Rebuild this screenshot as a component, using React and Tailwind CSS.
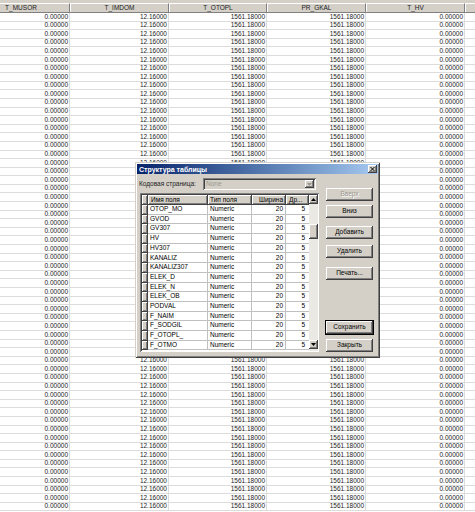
import React from 'react';

const cols = [
  { name: 'T_MUSOR', value: '0.00000', w: 'w-[98px]' },
  { name: 'T_IMDOM', value: '12.16000', w: 'w-[99px]' },
  { name: 'T_OTOPL', value: '1561.18000', w: 'w-[98px]' },
  { name: 'PR_GKAL', value: '1561.18000', w: 'w-[99px]' },
  { name: 'T_HV', value: '0.00000', w: 'w-[99px]' },
  { name: '', value: '', w: 'w-[99px]' },
];

const fields = [
  'OTOP_MO', 'GVOD', 'GV307', 'HV', 'HV307', 'KANALIZ', 'KANALIZ307', 'ELEK_D',
  'ELEK_N', 'ELEK_OB', 'PODVAL', 'F_NAIM', 'F_SODGIL', 'F_OTOPL_', 'F_OTMO',
];

const raised =
  'bg-[#d4d0c8] shadow-[inset_-1px_-1px_0_#404040,inset_1px_1px_0_#ffffff,inset_-2px_-2px_0_#808080]';

const Btn = ({ children, disabled, isDefault, className = '' }) => (
  <div
    className={`h-[13px] w-[47px] flex items-center justify-center text-[6.5px] leading-none ${raised} ${
      isDefault ? 'outline outline-1 outline-black' : ''
    } ${disabled ? 'text-[#9a978f] [text-shadow:1px_1px_0_#ffffff]' : 'text-black'} ${className}`}
  >
    {children}
  </div>
);

const Arrow = ({ up }) => (
  <div className={`w-[9px] h-[9px] flex items-center justify-center ${raised}`}>
    <svg width="5" height="3" viewBox="0 0 5 3">
      <path d={up ? 'M0 3 L2.5 0 L5 3 Z' : 'M0 0 L2.5 3 L5 0 Z'} fill="#000" />
    </svg>
  </div>
);

const Dialog = () => (
  <div
    className="absolute left-[135px] top-[162px] w-[245px] h-[196px] bg-[#d4d0c8] p-[2px] shadow-[inset_1px_1px_0_#d4d0c8,inset_-1px_-1px_0_#404040,inset_2px_2px_0_#ffffff,inset_-2px_-2px_0_#808080]"
  >
    {/* Title bar */}
    <div className="h-[10px] flex items-center justify-between bg-gradient-to-r from-[#0a246a] to-[#a6caf0] pl-[2px] pr-[1px]">
      <span className="text-white font-bold text-[7px] leading-none">Структура таблицы</span>
      <div className={`w-[9px] h-[8px] flex items-center justify-center ${raised}`}>
        <svg width="5" height="4" viewBox="0 0 5 4">
          <path d="M0.5 0 L4.5 4 M4.5 0 L0.5 4" stroke="#000" strokeWidth="1" />
        </svg>
      </div>
    </div>

    <div className="flex">
      {/* Left side */}
      <div className="flex flex-col pl-[2px]">
        <div className="flex items-center h-[12px] mt-[4px]">
          <span className="text-[6.5px] leading-none text-[#222] w-[64px]">Кодовая страница:</span>
          <div className="w-[113px] h-[12px] flex items-center justify-between bg-[#d4d0c8] shadow-[inset_1px_1px_0_#808080,inset_-1px_-1px_0_#ffffff,inset_2px_2px_0_#404040] pl-[3px] pr-[2px]">
            <span className="text-[6.5px] leading-none text-[#9a978f]">None</span>
            <div className={`w-[9px] h-[8px] flex items-center justify-center ${raised}`}>
              <svg width="5" height="3" viewBox="0 0 5 3">
                <path d="M0 0 L2.5 3 L5 0 Z" fill="#9a978f" />
              </svg>
            </div>
          </div>
        </div>

        {/* Field grid */}
        <div className="mt-[3px] ml-[1px] w-[179px] h-[159px] bg-white p-[1px] shadow-[inset_1px_1px_0_#808080,inset_-1px_-1px_0_#ffffff,inset_2px_2px_0_#404040] flex overflow-hidden">
          <div className="flex flex-col w-[167px] overflow-hidden ml-[1px] mt-[1px]">
            <div className="flex h-[10px] text-[6.5px] leading-none text-black shrink-0">
              <div className={`w-[6px] ${raised}`} />
              <div className={`w-[60px] flex items-center pl-[3px] ${raised}`}>Имя поля</div>
              <div className={`w-[44px] flex items-center pl-[2px] ${raised}`}>Тип поля</div>
              <div className={`w-[34px] flex items-center justify-end pr-[3px] ${raised}`}>Ширина</div>
              <div className={`w-[23px] flex items-center pl-[3px] ${raised}`}>Др...</div>
            </div>
            {fields.map((f) => (
              <div key={f} className="flex h-[9.7px] shrink-0 text-[6.5px] text-black leading-none">
                <div className={`w-[6px] ${raised}`} />
                <div className="w-[60px] flex items-center pl-[2px] border-r border-b border-[#c0c0c0]">{f}</div>
                <div className="w-[44px] flex items-center pl-[2px] border-r border-b border-[#c0c0c0]">Numeric</div>
                <div className="w-[34px] flex items-center justify-end pr-[2px] border-r border-b border-[#c0c0c0]">20</div>
                <div className="w-[23px] flex items-center justify-end pr-[4px] border-b border-[#c0c0c0]">5</div>
              </div>
            ))}
          </div>
          {/* Scrollbar */}
          <div className="w-[9px] mt-[1px] flex flex-col bg-[#ebe9e4]">
            <Arrow up />
            <div className={`w-[9px] h-[15px] mt-[20px] ${raised}`} />
            <div className="flex-1" />
            <div className="mb-[2px]">
              <Arrow />
            </div>
          </div>
        </div>
      </div>

      {/* Buttons */}
      <div className="flex flex-col ml-[7px] mt-[14px]">
        <Btn disabled>Вверх</Btn>
        <Btn className="mt-[4px]">Вниз</Btn>
        <Btn className="mt-[8px]">Добавить</Btn>
        <Btn className="mt-[6px]">Удалить</Btn>
        <Btn className="mt-[9px]">Печать...</Btn>
        <Btn isDefault className="mt-[41px]">Сохранить</Btn>
        <Btn className="mt-[5px]">Закрыть</Btn>
      </div>
    </div>
  </div>
);

export default function App() {
  const rows = Array.from({ length: 58 }, (_, i) => i);
  return (
    <div
      className="relative w-[475px] h-[512px] overflow-hidden bg-white leading-none"
      style={{ fontFamily: '"Liberation Sans", Arial, sans-serif' }}
    >
      <div className="ml-[-28px] flex flex-col">
        <div className="flex h-[13px] bg-[#d4d0c8] pt-[3px] border-b border-[#808080]">
          {cols.map((c, i) => (
            <div
              key={i}
              className={`${c.w} shrink-0 flex items-center justify-center text-[6.5px] leading-none text-[#222] border-t border-l border-white border-r border-r-[#808080]`}
            >
              {c.name}
            </div>
          ))}
        </div>
        {rows.map((r) => (
          <div key={r} className="flex h-[8.6px] shrink-0">
            {cols.map((c, i) => (
              <div
                key={i}
                className={`${c.w} shrink-0 flex items-center justify-end pr-[1px] text-[6.5px] leading-none text-[#222] border-r border-b border-[#dcdcdc]`}
              >
                {c.value}
              </div>
            ))}
          </div>
        ))}
      </div>
      <Dialog />
    </div>
  );
}
